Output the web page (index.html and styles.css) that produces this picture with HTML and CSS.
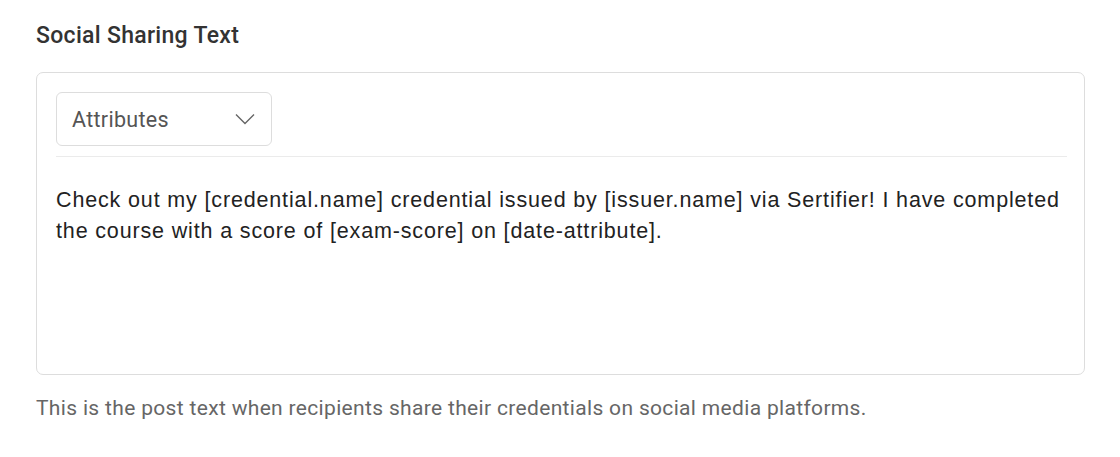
FILE: index.html
```html
<!DOCTYPE html>
<html>
<head>
<meta charset="utf-8">
<link rel="stylesheet" href="styles.css">
</head>
<body>
<div class="field">
  <div class="label">Social Sharing Text</div>
  <div class="editor">
    <div class="toolbar">
      <div class="select">
        <span class="select-text">Attributes</span>
        <svg class="chevron" width="20" height="12" viewBox="0 0 20 12"><path d="M1 1.5 L10 10.5 L19 1.5" fill="none" stroke="#666" stroke-width="1.4"/></svg>
      </div>
    </div>
    <div class="content">Check out my [credential.name] credential issued by [issuer.name] via Sertifier! I have completed the course with a score of [exam-score] on [date-attribute].</div>
  </div>
  <div class="help">This is the post text when recipients share their credentials on social media platforms.</div>
</div>
</body>
</html>
```
FILE: styles.css
```css
html, body { margin: 0; padding: 0; background: #fff; }
body { padding: 21px 35px 0 36px; }
.field { display: flex; flex-direction: column; }
.label {
  font-family: Roboto, "Open Sans", sans-serif;
  font-weight: 500;
  font-size: 23px;
  letter-spacing: 0.3px;
  line-height: 30px;
  color: #333;
}
.editor {
  margin-top: 21px;
  border: 1.5px solid #ddd;
  border-radius: 7px;
  height: 303px;
  padding: 19px 17px 0 19px;
  box-sizing: border-box;
}
.toolbar {
  padding-bottom: 10px;
  border-bottom: 1px solid #ebebeb;
}
.select {
  width: 216px;
  height: 54px;
  box-sizing: border-box;
  border: 1.5px solid #ddd;
  border-radius: 6px;
  display: flex;
  align-items: center;
  justify-content: space-between;
  padding: 0 16px 0 15px;
}
.select-text {
  font-family: Roboto, "Open Sans", sans-serif;
  font-size: 21.5px;
  letter-spacing: 0.3px;
  color: #555;
}
.chevron { display: block; }
.content {
  padding-top: 28px;
  font-family: "Liberation Sans", Arial, sans-serif;
  font-size: 21.5px;
  letter-spacing: 0.85px;
  line-height: 31px;
  color: #222;
}
.help {
  margin-top: 20px;
  font-family: Roboto, "Open Sans", sans-serif;
  font-size: 21px;
  letter-spacing: 0.33px;
  line-height: 26px;
  color: #666;
}
```
